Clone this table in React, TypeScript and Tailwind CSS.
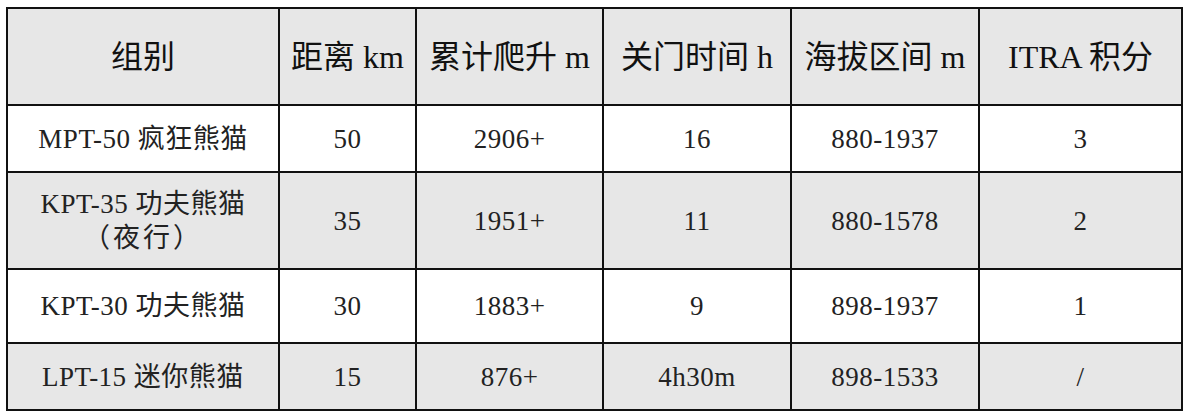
import React from 'react';

const headers = ['组别', '距离 km', '累计爬升 m', '关门时间 h', '海拔区间 m', 'ITRA 积分'];

const rows: { cells: React.ReactNode[]; gray: boolean }[] = [
  { cells: ['MPT-50 疯狂熊猫', '50', '2906+', '16', '880-1937', '3'], gray: false },
  {
    cells: [
      <>
        <span className="block">KPT-35 功夫熊猫</span>
        <span className="block tracking-[3px]">（夜行）</span>
      </>,
      '35',
      '1951+',
      '11',
      '880-1578',
      '2',
    ],
    gray: true,
  },
  { cells: ['KPT-30 功夫熊猫', '30', '1883+', '9', '898-1937', '1'], gray: false },
  { cells: ['LPT-15 迷你熊猫', '15', '876+', '4h30m', '898-1533', '/'], gray: true },
];

export default function App() {
  return (
    <div className="w-[1190px] h-[417px] bg-white pl-[6px] pt-[7px] font-['Liberation_Serif','Noto_Sans_CJK_SC',serif]">
      <div className="grid w-[1177px] grid-cols-[272px_137px_187px_188px_188px_203px] grid-rows-[97px_67px_97px_74px_67px] border-l-2 border-t-2 border-[#111]">
        {headers.map((h) => (
          <div
            key={h}
            className="flex items-center justify-center border-r-2 border-b-2 border-[#111] bg-[#e7e7e7] text-[32px] text-[#111]"
          >
            {h}
          </div>
        ))}
        {rows.map((row, ri) =>
          row.cells.map((c, ci) => (
            <div
              key={`${ri}-${ci}`}
              className={`flex flex-col items-center justify-center text-center border-r-2 border-b-2 border-[#111] text-[27px] leading-[34px] tracking-[0.5px] text-[#222] ${
                row.gray ? 'bg-[#e7e7e7]' : 'bg-white'
              }`}
            >
              {c}
            </div>
          ))
        )}
      </div>
    </div>
  );
}
